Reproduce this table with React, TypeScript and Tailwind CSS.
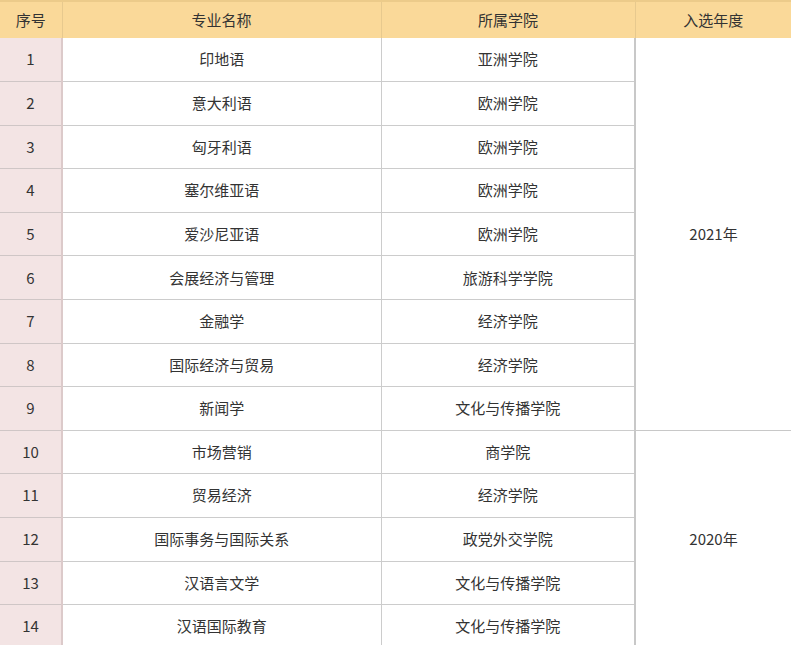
import React from "react";

const rows: [string, string][] = [
  ["印地语", "亚洲学院"],
  ["意大利语", "欧洲学院"],
  ["匈牙利语", "欧洲学院"],
  ["塞尔维亚语", "欧洲学院"],
  ["爱沙尼亚语", "欧洲学院"],
  ["会展经济与管理", "旅游科学学院"],
  ["金融学", "经济学院"],
  ["国际经济与贸易", "经济学院"],
  ["新闻学", "文化与传播学院"],
  ["市场营销", "商学院"],
  ["贸易经济", "经济学院"],
  ["国际事务与国际关系", "政党外交学院"],
  ["汉语言文学", "文化与传播学院"],
  ["汉语国际教育", "文化与传播学院"],
];

export default function App() {
  return (
    <div
      className="w-[791px] h-[645px] overflow-hidden bg-white text-[#333333] text-[15px]"
      style={{ fontFamily: '"Noto Sans CJK SC", "Noto Sans", sans-serif' }}
    >
      <table className="table-fixed border-collapse w-[791px]">
        <colgroup>
          <col className="w-[62px]" />
          <col className="w-[319px]" />
          <col className="w-[254px]" />
          <col className="w-[156px]" />
        </colgroup>
        <thead>
          <tr className="h-[37px] bg-[#fad999]">
            <th className="font-normal text-center border-t-2 border-t-[#eccb8a] border-r border-r-[#e7c98e] p-0">序号</th>
            <th className="font-normal text-center border-t-2 border-t-[#eccb8a] border-r border-r-[#e7c98e] p-0">专业名称</th>
            <th className="font-normal text-center border-t-2 border-t-[#eccb8a] border-r border-r-[#e7c98e] p-0">所属学院</th>
            <th className="font-normal text-center border-t-2 border-t-[#eccb8a] p-0">入选年度</th>
          </tr>
        </thead>
        <tbody>
          {rows.map(([name, school], i) => (
            <tr key={i} className="h-[43.6px]">
              <td className="bg-[#f3e4e4] text-center border-b border-b-[#cfc6c6] border-r-2 border-r-[#dccaca] p-0">
                {i + 1}
              </td>
              <td className="text-center border-b border-b-[#cccccc] border-r border-r-[#cccccc] p-0">{name}</td>
              <td className="text-center border-b border-b-[#cccccc] border-r-2 border-r-[#c8c8c8] p-0">{school}</td>
              {i === 0 && (
                <td rowSpan={9} className="text-center border-b border-b-[#c8c8c8] p-0">
                  2021年
                </td>
              )}
              {i === 9 && (
                <td rowSpan={5} className="text-center p-0">
                  2020年
                </td>
              )}
            </tr>
          ))}
        </tbody>
      </table>
    </div>
  );
}
